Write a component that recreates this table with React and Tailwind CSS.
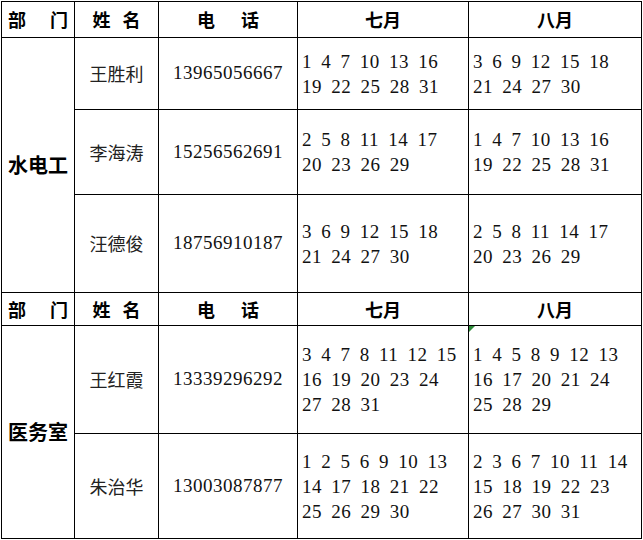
import React from "react";

const CJK = "font-['Noto_Sans_CJK_SC','Noto_Sans',sans-serif]";
const NUM = "font-['Liberation_Serif','Noto_Sans_CJK_SC',serif] [word-spacing:4px] tracking-[0.5px]";

const GROUPS = [
  {
    dept: "水电工",
    span: "row-span-3",
    rows: [
      {
        name: "王胜利",
        phone: "13965056667",
        jul: ["1 4 7 10 13 16", "19 22 25 28 31"],
        aug: ["3 6 9 12 15 18", "21 24 27 30"],
      },
      {
        name: "李海涛",
        phone: "15256562691",
        jul: ["2 5 8 11 14 17", "20 23 26 29"],
        aug: ["1 4 7 10 13 16", "19 22 25 28 31"],
      },
      {
        name: "汪德俊",
        phone: "18756910187",
        jul: ["3 6 9 12 15 18", "21 24 27 30"],
        aug: ["2 5 8 11 14 17", "20 23 26 29"],
      },
    ],
  },
  {
    dept: "医务室",
    span: "row-span-2",
    rows: [
      {
        name: "王红霞",
        phone: "13339296292",
        jul: ["3 4 7 8 11 12 15", "16 19 20 23 24", "27 28 31"],
        aug: ["1 4 5 8 9 12 13", "16 17 20 21 24", "25 28 29"],
        mark: true,
      },
      {
        name: "朱治华",
        phone: "13003087877",
        jul: ["1 2 5 6 9 10 13", "14 17 18 21 22", "25 26 29 30"],
        aug: ["2 3 6 7 10 11 14", "15 18 19 22 23", "26 27 30 31"],
      },
    ],
  },
];

const head = `bg-white flex items-center text-[18px] font-bold text-black ${CJK}`;

const HeaderRow = () => (
  <>
    <div className={`${head} justify-between px-[6px]`}>
      <span>部</span>
      <span>门</span>
    </div>
    <div className={`${head} justify-center gap-[12px]`}>
      <span>姓</span>
      <span>名</span>
    </div>
    <div className={`${head} justify-center gap-[26px]`}>
      <span>电</span>
      <span>话</span>
    </div>
    <div className={`${head} justify-center`}>七月</div>
    <div className={`${head} justify-center`}>八月</div>
  </>
);

const Dates = ({ lines, mark }) => (
  <div className={`relative bg-white flex flex-col justify-center pl-[4px] text-[19px] leading-[25px] text-[#111] whitespace-nowrap ${NUM}`}>
    {mark && (
      <span className="absolute left-0 top-0 w-0 h-0 border-t-[6px] border-r-[6px] border-t-[#2e8b3a] border-r-transparent" />
    )}
    {lines.map((l, i) => (
      <div key={i}>{l}</div>
    ))}
  </div>
);

export default function App() {
  return (
    <div className="bg-white w-[643px] h-[540px] pl-[1px] pt-[1px]">
      <div className="grid grid-cols-[72px_83px_138px_170px_172px] grid-rows-[35px_71px_84px_97px_32px_107px_104px] gap-px bg-black p-px w-max">
        {GROUPS.map((g, gi) => (
          <React.Fragment key={gi}>
            <HeaderRow />
            <div className={`bg-white flex items-center justify-center text-[20px] font-bold text-black ${CJK} ${g.span}`}>
              {g.dept}
            </div>
            {g.rows.map((r, ri) => (
              <React.Fragment key={ri}>
                <div className={`bg-white flex items-center justify-center text-[18px] text-[#222] ${CJK}`}>
                  {r.name}
                </div>
                <div className={`bg-white flex items-center justify-center text-[19px] text-[#111] ${NUM}`}>
                  {r.phone}
                </div>
                <Dates lines={r.jul} />
                <Dates lines={r.aug} mark={r.mark} />
              </React.Fragment>
            ))}
          </React.Fragment>
        ))}
      </div>
    </div>
  );
}
